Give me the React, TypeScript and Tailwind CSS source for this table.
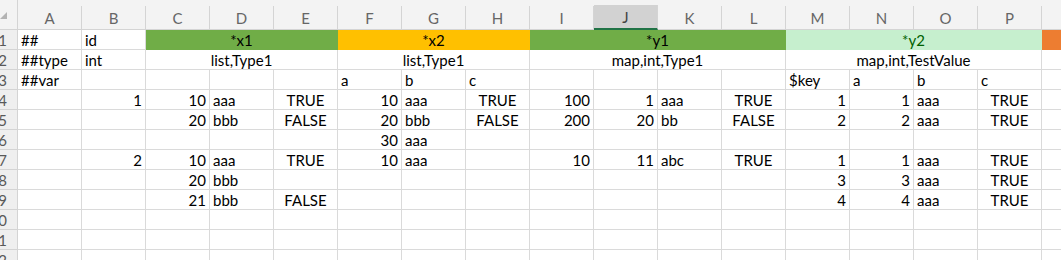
import React from 'react'

type Align = 'l' | 'r' | 'c'
type Fill = 'green' | 'amber' | 'mint' | 'orange'

interface Cell {
  v: string
  align?: Align
  span?: number
  fill?: Fill
}

const COLS = ['A', 'B', 'C', 'D', 'E', 'F', 'G', 'H', 'I', 'J', 'K', 'L', 'M', 'N', 'O', 'P', 'Q']
const SELECTED_COL = 'J'
// last column only peeks into view, its letter sits past the edge
const CLIPPED_COL = 'Q'

const alignClass: Record<Align, string> = {
  l: 'justify-start pl-[3px]',
  r: 'justify-end pr-[3px]',
  c: 'justify-center',
}

const fillClass: Record<Fill, string> = {
  green: 'bg-[#70ad47] border-[#70ad47] text-black',
  amber: 'bg-[#ffc000] border-[#ffc000] text-black',
  mint: 'bg-[#c6efce] border-[#c6efce] text-[#006100]',
  orange: 'bg-[#ed7d31] border-[#ed7d31] text-black',
}

// small builders for the cell kinds
const s = (v = ''): Cell => ({ v, align: 'l' })
const n = (v: string): Cell => ({ v, align: 'r' })
const b = (v: string): Cell => ({ v, align: 'c' })
const e = (): Cell => ({ v: '' })
const blank = (count: number): Cell[] => Array.from({ length: count }, e)

const rows: Cell[][] = [
  [
    s('##'),
    s('id'),
    { v: '*x1', align: 'c', span: 3, fill: 'green' },
    { v: '*x2', align: 'c', span: 3, fill: 'amber' },
    { v: '*y1', align: 'c', span: 4, fill: 'green' },
    { v: '*y2', align: 'c', span: 4, fill: 'mint' },
    { v: '', fill: 'orange' },
  ],
  [
    s('##type'),
    s('int'),
    { v: 'list,Type1', align: 'c', span: 3 },
    { v: 'list,Type1', align: 'c', span: 3 },
    { v: 'map,int,Type1', align: 'c', span: 4 },
    { v: 'map,int,TestValue', align: 'c', span: 4 },
    e(),
  ],
  [s('##var'), ...blank(4), s('a'), s('b'), s('c'), ...blank(4), s('$key'), s('a'), s('b'), s('c'), e()],
  [e(), n('1'), n('10'), s('aaa'), b('TRUE'), n('10'), s('aaa'), b('TRUE'), n('100'), n('1'), s('aaa'), b('TRUE'), n('1'), n('1'), s('aaa'), b('TRUE'), e()],
  [e(), e(), n('20'), s('bbb'), b('FALSE'), n('20'), s('bbb'), b('FALSE'), n('200'), n('20'), s('bb'), b('FALSE'), n('2'), n('2'), s('aaa'), b('TRUE'), e()],
  [...blank(5), n('30'), s('aaa'), ...blank(10)],
  [e(), n('2'), n('10'), s('aaa'), b('TRUE'), n('10'), s('aaa'), e(), n('10'), n('11'), s('abc'), b('TRUE'), n('1'), n('1'), s('aaa'), b('TRUE'), e()],
  [e(), e(), n('20'), s('bbb'), ...blank(8), n('3'), n('3'), s('aaa'), b('TRUE'), e()],
  [e(), e(), n('21'), s('bbb'), b('FALSE'), ...blank(7), n('4'), n('4'), s('aaa'), b('TRUE'), e()],
  blank(17),
  blank(17),
  blank(17),
]

function ColumnHeader() {
  return (
    <>
      {/* select-all corner */}
      <div className="flex h-[30px] flex-col justify-end border-r border-b border-[#d4d4d4] bg-[#f3f3f3] pb-[9px]">
        <svg width="8" height="8" viewBox="0 0 8 8" className="block">
          <polygon points="7,0 7,7 0,7" fill="#b3b3b3" />
        </svg>
      </div>
      {COLS.map((c) => (
        <div key={c} className="flex h-[30px] flex-col bg-[#f3f3f3]">
          <div className="h-[6px]" />
          <div
            className={
              c === SELECTED_COL
                ? 'flex flex-1 items-center justify-center border-r border-b-2 border-[#d4d4d4] border-b-[#217346] bg-[#d2d2d2] pt-[1px] text-[15px] text-[#444]'
                : 'flex flex-1 items-center justify-center border-r border-b border-[#d4d4d4] pt-[1px] text-[15px] text-[#666]'
            }
          >
            {c === CLIPPED_COL ? '' : c}
          </div>
        </div>
      ))}
    </>
  )
}

function SheetRow({ index, cells }: { index: number; cells: Cell[] }) {
  return (
    <>
      <div className="flex h-[20px] items-end justify-end overflow-hidden border-r border-b border-[#d4d4d4] bg-[#efefef] pr-[10px] text-[15px] leading-[18px] text-[#595959]">
        <span className="shrink-0">{index + 1}</span>
      </div>
      {cells.map((cell, i) => (
        <div
          key={i}
          style={cell.span ? { gridColumn: `span ${cell.span}` } : undefined}
          className={[
            'flex h-[20px] items-end overflow-hidden whitespace-nowrap border-r border-b text-[15px] leading-[18px]',
            cell.fill ? fillClass[cell.fill] : 'border-[#dadada] bg-white text-black',
            alignClass[cell.align ?? 'l'],
          ].join(' ')}
        >
          {cell.v}
        </div>
      ))}
    </>
  )
}

export default function App() {
  return (
    <div
      className="h-[260px] w-[1061px] overflow-hidden bg-white"
      style={{ fontFamily: 'Lato, "Open Sans", sans-serif' }}
    >
      <div className="grid grid-cols-[18px_repeat(17,64px)]">
        <ColumnHeader />
        {rows.map((cells, r) => (
          <SheetRow key={r} index={r} cells={cells} />
        ))}
      </div>
    </div>
  )
}
